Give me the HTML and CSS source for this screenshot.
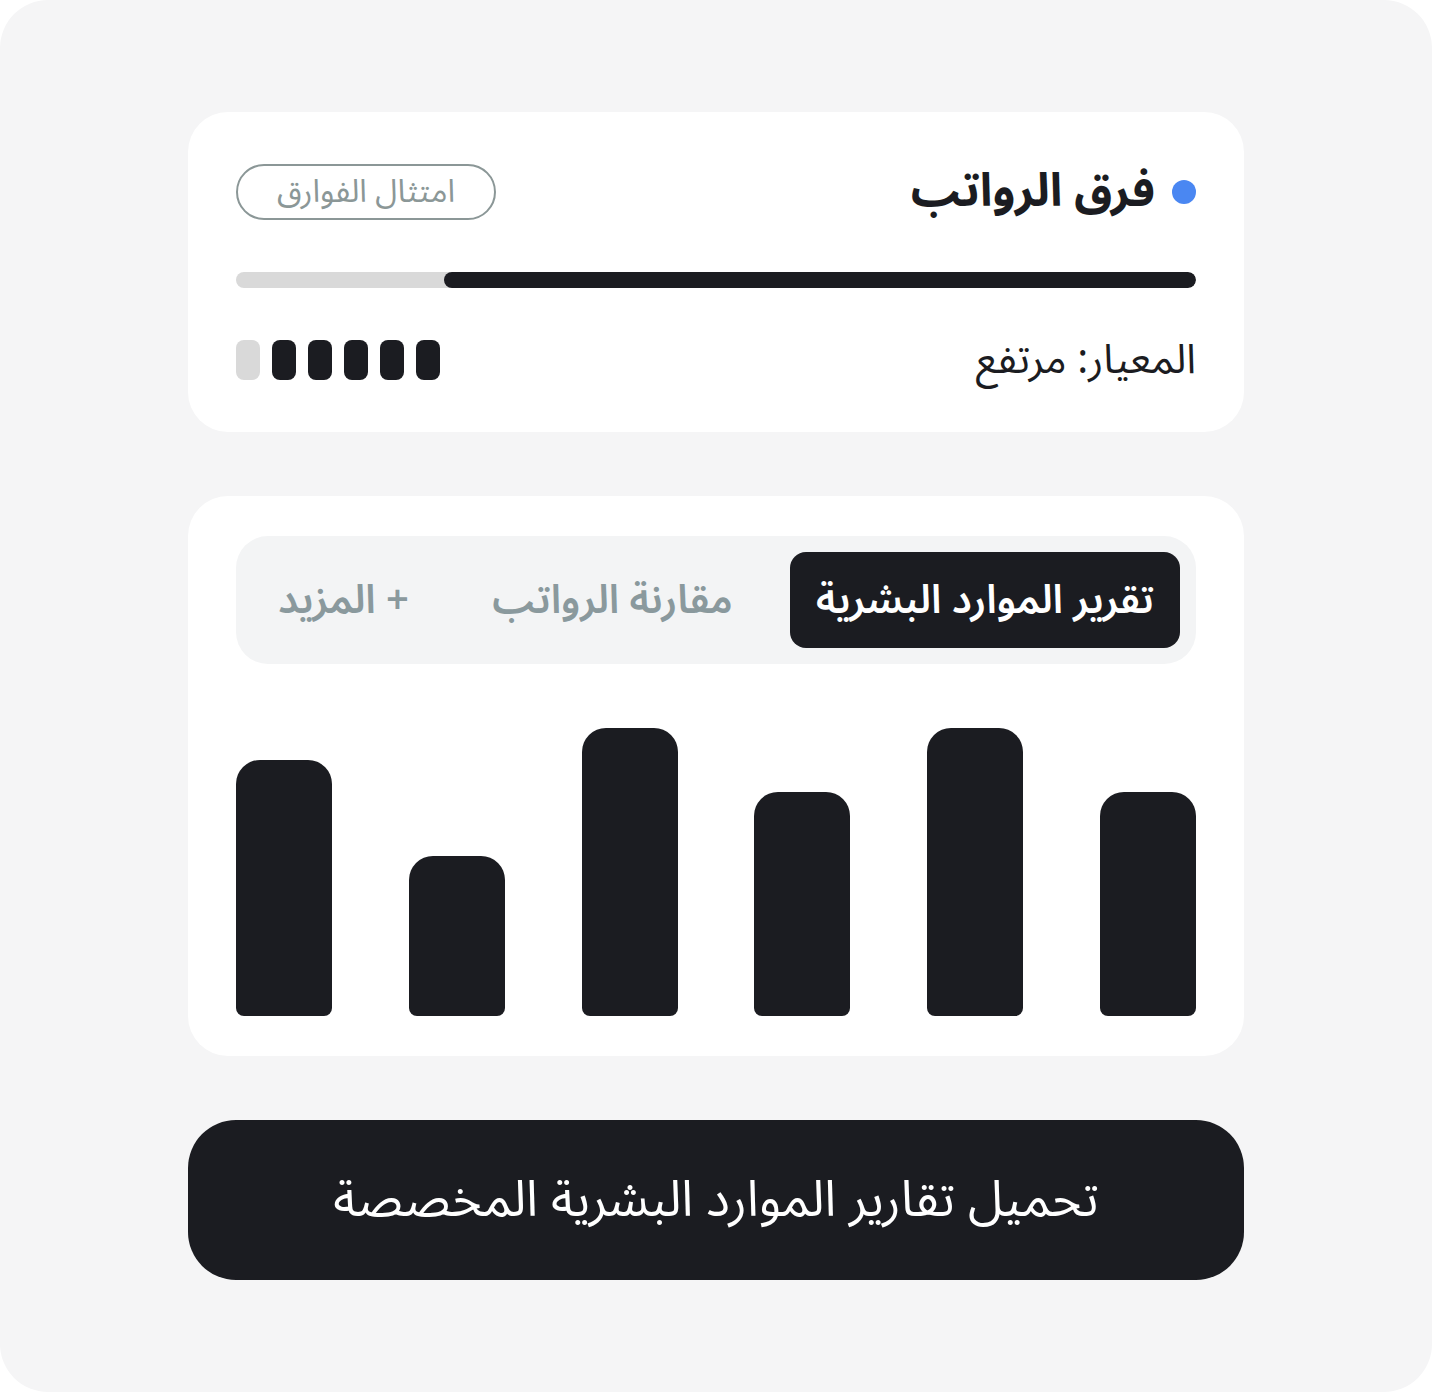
FILE: index.html
```html
<!DOCTYPE html>
<html lang="ar" dir="rtl">
<head>
<meta charset="utf-8">
<link rel="stylesheet" href="styles.css">
</head>
<body>
<div class="frame">
  <section class="card card-top">
    <div class="head">
      <div class="title"><span class="dot"></span><span>فرق الرواتب</span></div>
      <button class="pill">امتثال الفوارق</button>
    </div>
    <div class="track"><div class="fill" style="width:78.33%"></div></div>
    <div class="meta">
      <span class="meta-text">المعيار: مرتفع</span>
      <div class="segs">
        <span class="seg on"></span><span class="seg on"></span><span class="seg on"></span><span class="seg on"></span><span class="seg on"></span><span class="seg"></span>
      </div>
    </div>
  </section>

  <section class="card card-chart">
    <div class="tabs">
      <div class="tab active">تقرير الموارد البشرية</div>
      <div class="tab">مقارنة الرواتب</div>
      <div class="tab">+ المزيد</div>
    </div>
    <div class="chart">
      <div class="bar" style="height:224px"></div>
      <div class="bar" style="height:288px"></div>
      <div class="bar" style="height:224px"></div>
      <div class="bar" style="height:288px"></div>
      <div class="bar" style="height:160px"></div>
      <div class="bar" style="height:256px"></div>
    </div>
  </section>

  <button class="cta">تحميل تقارير الموارد البشرية المخصصة</button>
</div>
</body>
</html>
```

FILE: styles.css
```css
* { box-sizing: border-box; }
html, body { margin: 0; padding: 0; background: #ffffff; }
body {
  font-family: "Noto Sans Arabic", "Noto Sans", "DejaVu Sans", sans-serif;
  color: #1b1c21;
}
.frame {
  width: 1432px;
  height: 1392px;
  background: #f5f5f6;
  border-radius: 48px;
  padding: 112px 188px 0;
  display: flex;
  flex-direction: column;
  gap: 64px;
}
.card {
  background: #ffffff;
  border-radius: 40px;
}
.card-top {
  padding: 48px 48px 48px;
  height: 320px;
  display: flex;
  flex-direction: column;
}
.head {
  height: 64px;
  display: flex;
  align-items: center;
  justify-content: space-between;
}
.title {
  display: flex;
  align-items: center;
  gap: 17px;
  font-size: 46px;
  font-weight: 700;
  line-height: 1;
}
.dot {
  width: 24px;
  height: 24px;
  border-radius: 50%;
  background: #4a87f2;
  flex: none;
}
.pill {
  font-family: inherit;
  width: 260px;
  height: 56px;
  border: 2px solid #8b9797;
  border-radius: 28px;
  background: #ffffff;
  color: #8b9797;
  font-size: 32px;
  line-height: 1;
  padding: 0;
}
.track {
  margin-top: 48px;
  height: 16px;
  border-radius: 8px;
  background: #d9d9d9;
  overflow: hidden;
}
.fill {
  height: 100%;
  background: #1b1c21;
  border-radius: 8px;
}
.meta {
  margin-top: 48px;
  height: 48px;
  display: flex;
  align-items: center;
  justify-content: space-between;
}
.meta-text {
  font-size: 41px;
  line-height: 1;
}
.segs {
  display: flex;
  gap: 12px;
}
.seg {
  width: 24px;
  height: 40px;
  border-radius: 8px;
  background: #d9d9d9;
}
.seg.on { background: #1b1c21; }

.card-chart {
  height: 560px;
  padding: 40px 48px 40px;
  display: flex;
  flex-direction: column;
}
.tabs {
  height: 128px;
  background: #f3f4f5;
  border-radius: 32px;
  padding: 16px;
  display: flex;
  align-items: center;
  justify-content: space-between;
}
.tab {
  height: 96px;
  padding: 0 26px;
  display: flex;
  align-items: center;
  font-size: 40px;
  font-weight: 600;
  color: #8a999d;
  border-radius: 16px;
  white-space: nowrap;
}
.tab.active {
  background: #1b1c21;
  color: #ffffff;
}
.chart {
  margin-top: 64px;
  flex: 1;
  display: flex;
  align-items: flex-end;
  justify-content: space-between;
}
.bar {
  width: 96px;
  background: #1b1c21;
  border-radius: 24px 24px 8px 8px;
}
.cta {
  font-family: inherit;
  height: 160px;
  border: none;
  border-radius: 48px;
  background: #1b1c21;
  color: #ffffff;
  font-size: 50px;
  padding: 0;
}
```
